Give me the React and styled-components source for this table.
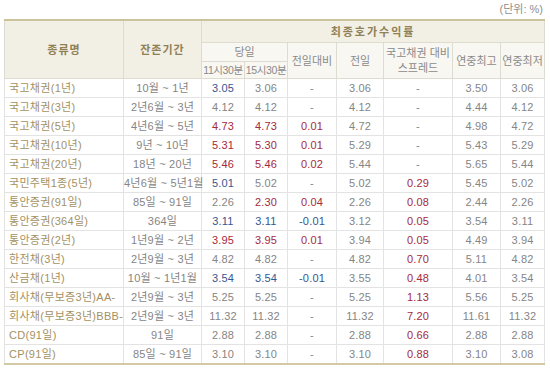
import React from "react";
import styled, { createGlobalStyle } from "styled-components";

const Global = createGlobalStyle`
  html, body { margin: 0; padding: 0; background: #fff; }
  body { font-family: "Liberation Sans", "Noto Sans CJK KR", sans-serif; }
`;

const Page = styled.div`
  width: 550px;
  height: 372px;
  padding: 0 6px 0 4px;
  box-sizing: border-box;
  display: flex;
  flex-direction: column;
`;

const Unit = styled.div`
  height: 19px;
  line-height: 18px;
  font-size: 11px;
  color: #8f8f8f;
  text-align: right;
  padding-right: 1px;
`;

const Table = styled.table`
  width: 540px;
  table-layout: fixed;
  border-collapse: collapse;
  border-top: 2px solid #cdc39b;
  border-bottom: 2px solid #d3c9a3;
  font-size: 11px;
`;

const Th = styled.th`
  background: ${(p) => (p.$sub ? "#f8f7f2" : "#f2efe4")};
  color: ${(p) => (p.$sub ? "#8a8a8a" : "#8f8056")};
  font-weight: ${(p) => (p.$sub ? 400 : 700)};
  font-size: ${(p) => (p.$small ? "10.5px" : "11px")};
  letter-spacing: ${(p) => p.$ls || "0"};
  border: 1px solid #dedbd0;
  padding: 0;
  height: ${(p) => p.$h || 18}px;
  line-height: ${(p) => (p.$tight ? "15px" : "16px")};
  white-space: nowrap;
  overflow: visible;
`;

const Td = styled.td`
  border: 1px solid #e3e3e3;
  padding: ${(p) => (p.$left ? "0 0 0 4px" : "0")};
  height: 18px;
  line-height: 18px;
  text-align: ${(p) => (p.$left ? "left" : "center")};
  letter-spacing: ${(p) => (p.$left ? "0.3px" : "0.2px")};
  color: ${(p) =>
    p.$tone === "r" ? "#a52a3c" : p.$tone === "b" ? "#35578f" : p.$left ? "#a39163" : "#858585"};
  white-space: nowrap;
  overflow: visible;
`;

const rows = [
  ["국고채권(1년)", "10월 ~ 1년", ["3.05", "b"], "3.06", "-", "3.06", "-", "3.50", "3.06"],
  ["국고채권(3년)", "2년6월 ~ 3년", "4.12", "4.12", "-", "4.12", "-", "4.44", "4.12"],
  ["국고채권(5년)", "4년6월 ~ 5년", ["4.73", "r"], ["4.73", "r"], ["0.01", "r"], "4.72", "-", "4.98", "4.72"],
  ["국고채권(10년)", "9년 ~ 10년", ["5.31", "r"], ["5.30", "r"], ["0.01", "r"], "5.29", "-", "5.43", "5.29"],
  ["국고채권(20년)", "18년 ~ 20년", ["5.46", "r"], ["5.46", "r"], ["0.02", "r"], "5.44", "-", "5.65", "5.44"],
  ["국민주택1종(5년)", "4년6월 ~ 5년1월", ["5.01", "b"], "5.02", "-", "5.02", ["0.29", "r"], "5.45", "5.02"],
  ["통안증권(91일)", "85일 ~ 91일", "2.26", ["2.30", "r"], ["0.04", "r"], "2.26", ["0.08", "r"], "2.44", "2.26"],
  ["통안증권(364일)", "364일", ["3.11", "b"], ["3.11", "b"], ["-0.01", "b"], "3.12", ["0.05", "r"], "3.54", "3.11"],
  ["통안증권(2년)", "1년9월 ~ 2년", ["3.95", "r"], ["3.95", "r"], ["0.01", "r"], "3.94", ["0.05", "r"], "4.49", "3.94"],
  ["한전채(3년)", "2년9월 ~ 3년", "4.82", "4.82", "-", "4.82", ["0.70", "r"], "5.11", "4.82"],
  ["산금채(1년)", "10월 ~ 1년1월", ["3.54", "b"], ["3.54", "b"], ["-0.01", "b"], "3.55", ["0.48", "r"], "4.01", "3.54"],
  ["회사채(무보증3년)AA-", "2년9월 ~ 3년", "5.25", "5.25", "-", "5.25", ["1.13", "r"], "5.56", "5.25"],
  ["회사채(무보증3년)BBB-", "2년9월 ~ 3년", "11.32", "11.32", "-", "11.32", ["7.20", "r"], "11.61", "11.32"],
  ["CD(91일)", "91일", "2.88", "2.88", "-", "2.88", ["0.66", "r"], "2.88", "2.88"],
  ["CP(91일)", "85일 ~ 91일", "3.10", "3.10", "-", "3.10", ["0.88", "r"], "3.10", "3.08"],
];

const widths = [119, 78, 43, 43, 49, 47, 69, 48, 44];

export default function App() {
  return (
    <Page>
      <Global />
      <Unit>(단위: %)</Unit>
      <Table>
        <colgroup>
          {widths.map((w, i) => (
            <col key={i} style={{ width: w }} />
          ))}
        </colgroup>
        <thead>
          <tr>
            <Th rowSpan={3} $h={21} $ls="1px">종류명</Th>
            <Th rowSpan={3} $h={21} $ls="1px">잔존기간</Th>
            <Th colSpan={7} $h={21} $ls="2px">최종호가수익률</Th>
          </tr>
          <tr>
            <Th colSpan={2} $sub $h={18}>당일</Th>
            <Th rowSpan={2} $sub>전일대비</Th>
            <Th rowSpan={2} $sub>전일</Th>
            <Th rowSpan={2} $sub $tight>
              국고채권 대비
              <br />
              스프레드
            </Th>
            <Th rowSpan={2} $sub>연중최고</Th>
            <Th rowSpan={2} $sub>연중최저</Th>
          </tr>
          <tr>
            <Th $sub $small $h={16} $ls="-0.4px">11시30분</Th>
            <Th $sub $small $h={16} $ls="-0.4px">15시30분</Th>
          </tr>
        </thead>
        <tbody>
          {rows.map((r, i) => (
            <tr key={i}>
              {r.map((c, j) => {
                const [text, tone] = Array.isArray(c) ? c : [c, null];
                return (
                  <Td key={j} $left={j === 0} $tone={tone}>
                    {text}
                  </Td>
                );
              })}
            </tr>
          ))}
        </tbody>
      </Table>
    </Page>
  );
}
